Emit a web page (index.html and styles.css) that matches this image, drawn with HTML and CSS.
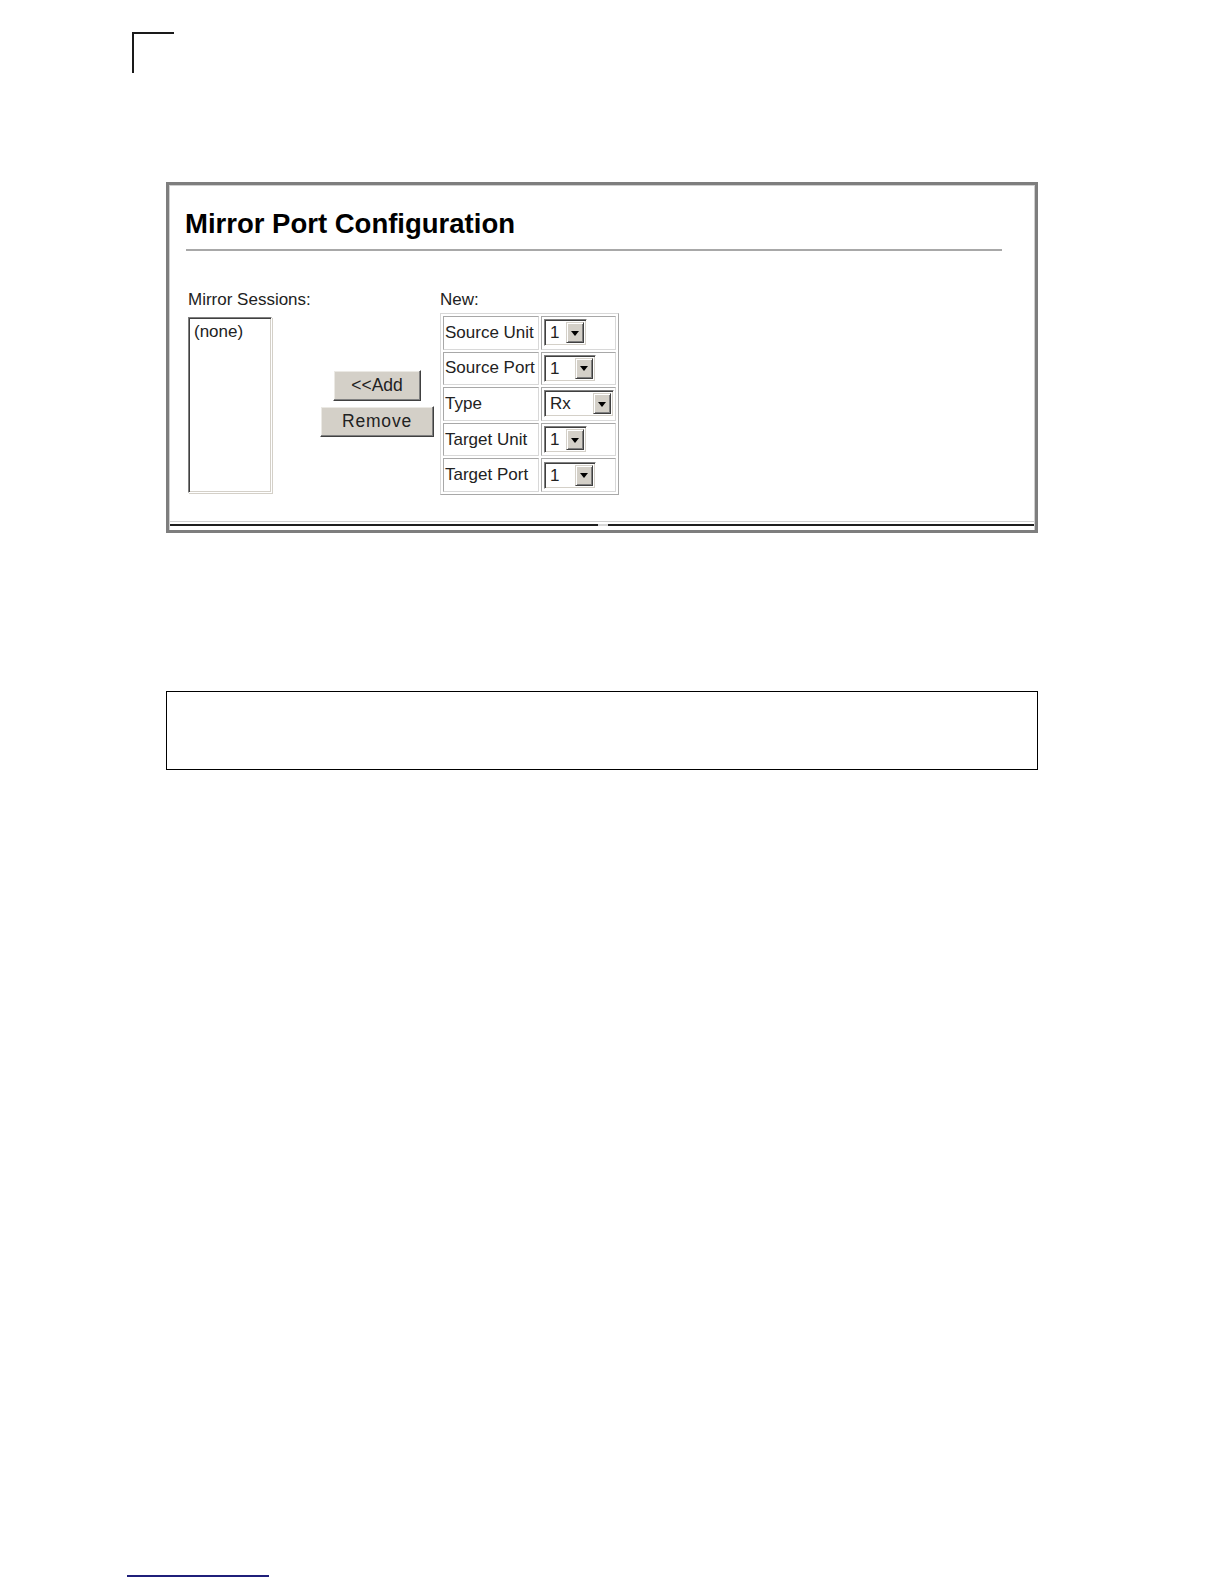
FILE: index.html
```html
<!DOCTYPE html>
<html lang="en">
<head>
<meta charset="utf-8">
<title>Mirror Port Configuration</title>
<link rel="stylesheet" href="styles.css">
</head>
<body>
<div class="page">
  <div class="corner"></div>

  <div class="frame">
    <div class="frame-inner">
      <h1 class="title">Mirror Port Configuration</h1>
      <div class="rule"></div>

      <div class="form">
        <div class="sessions">
          <div class="label">Mirror Sessions:</div>
          <div class="listbox"><div class="option">(none)</div></div>
        </div>

        <div class="actions">
          <button class="btn btn-add" type="button">&lt;&lt;Add</button>
          <button class="btn btn-remove" type="button">Remove</button>
        </div>

        <div class="newsession">
          <div class="label">New:</div>
          <table class="fields">
            <tr>
              <td class="name">Source Unit</td>
              <td class="value"><div class="select w-short"><span class="select-text">1</span><span class="select-btn"></span></div></td>
            </tr>
            <tr>
              <td class="name">Source Port</td>
              <td class="value"><div class="select w-mid"><span class="select-text">1</span><span class="select-btn"></span></div></td>
            </tr>
            <tr>
              <td class="name">Type</td>
              <td class="value"><div class="select w-long"><span class="select-text">Rx</span><span class="select-btn"></span></div></td>
            </tr>
            <tr>
              <td class="name">Target Unit</td>
              <td class="value"><div class="select w-short"><span class="select-text">1</span><span class="select-btn"></span></div></td>
            </tr>
            <tr>
              <td class="name">Target Port</td>
              <td class="value"><div class="select w-mid"><span class="select-text">1</span><span class="select-btn"></span></div></td>
            </tr>
          </table>
        </div>
      </div>

      <div class="hbar">
        <div class="hbar-line">
          <span class="seg seg-left"></span>
          <span class="notch"></span>
          <span class="seg seg-right"></span>
        </div>
      </div>
    </div>
  </div>

  <div class="note-box"></div>

  <div class="footer-line"></div>
</div>
</body>
</html>
```

FILE: styles.css
```css
* {
  box-sizing: border-box;
}

body {
  margin: 0;
  background: #ffffff;
  font-family: "Liberation Sans", Arial, sans-serif;
  color: #222222;
}

.page {
  padding-top: 32px;
}

.corner {
  margin-left: 132px;
  width: 42px;
  height: 41px;
  border-top: 2px solid #1a1a1a;
  border-left: 2px solid #1a1a1a;
}

/* screenshot frame */
.frame {
  margin-top: 109px;
  margin-left: 166px;
  width: 872px;
  height: 351px;
  border: 3px solid #7e7e7e;
}

.frame-inner {
  height: 100%;
  display: flex;
  flex-direction: column;
  border: 1px solid #cfcfcf;
  border-bottom: 0;
  padding: 22px 0 0 15px;
}

.title {
  margin: 0;
  font-size: 27.5px;
  line-height: 32px;
  font-weight: bold;
  color: #000000;
}

.rule {
  margin-top: 9px;
  margin-left: 1px;
  width: 816px;
  height: 2px;
  background: #a8a8a8;
}

.form {
  display: flex;
  align-items: flex-start;
  margin-top: 39px;
}

.label {
  font-size: 17px;
  line-height: 20px;
}

.sessions {
  width: 135px;
  padding-left: 3px;
}

.listbox {
  margin-top: 7px;
  width: 84px;
  height: 176px;
  background: #ffffff;
  border: 1px solid;
  border-color: #808080 #ffffff #ffffff #808080;
  box-shadow: inset 1px 1px 0 #404040, inset -1px -1px 0 #d4d0c8, 1px 1px 0 #d4d0c8;
  padding: 4px 5px;
}

.option {
  font-size: 17px;
  line-height: 20px;
}

.actions {
  width: 114px;
  display: flex;
  flex-direction: column;
  align-items: center;
  gap: 5px;
  padding-top: 80px;
}

.btn {
  font-family: "Liberation Sans", Arial, sans-serif;
  font-size: 17.5px;
  line-height: 1;
  color: #222222;
  background: #d4d0c8;
  height: 31px;
  padding: 0;
  margin: 0;
  border: 1px solid;
  border-color: #ffffff #404040 #404040 #ffffff;
  box-shadow: inset -1px -1px 0 #808080, inset 1px 1px 0 #ebe9e4;
  border-radius: 0;
}

.btn-add {
  width: 88px;
}

.btn-remove {
  width: 114px;
  letter-spacing: 0.8px;
}

.newsession {
  margin-left: 6px;
}

.fields {
  margin-top: 3px;
  border: 1px solid;
  border-color: #d8d8d8 #a8a8a8 #a8a8a8 #d8d8d8;
  border-spacing: 2px;
}

.fields td {
  border: 1px solid;
  border-color: #a8a8a8 #d8d8d8 #d8d8d8 #a8a8a8;
  height: 33.6px;
  padding: 0 1px;
  vertical-align: middle;
}

.fields td.name {
  width: 96px;
  font-size: 17px;
  line-height: 20px;
  white-space: nowrap;
}

.fields td.value {
  width: 75px;
  padding-left: 2px;
}

.select {
  display: flex;
  align-items: stretch;
  height: 27px;
  background: #ffffff;
  border: 1px solid;
  border-color: #808080 #ffffff #ffffff #808080;
  box-shadow: inset 1px 1px 0 #404040, inset -1px -1px 0 #d4d0c8;
  padding: 2px;
}

.w-short {
  width: 43px;
}

.w-mid {
  width: 52px;
}

.w-long {
  width: 70px;
}

.select-text {
  flex: 1;
  font-size: 17px;
  line-height: 21px;
  padding-left: 3px;
  color: #222222;
}

.select-btn {
  width: 18px;
  background: #d4d0c8;
  border: 1px solid;
  border-color: #d4d0c8 #404040 #404040 #d4d0c8;
  box-shadow: inset 1px 1px 0 #ffffff, inset -1px -1px 0 #808080;
  display: flex;
  align-items: center;
  justify-content: center;
}

.select-btn::after {
  content: "";
  width: 0;
  height: 0;
  margin-top: 1px;
  border-left: 4.5px solid transparent;
  border-right: 4.5px solid transparent;
  border-top: 5px solid #000000;
}

/* cut-off horizontal scrollbar edge at frame bottom */
.hbar {
  margin-top: auto;
  margin-bottom: 4px;
  margin-left: -15px;
  border-top: 1px solid #cfcfcf;
  padding-top: 2px;
}

.hbar-line {
  display: flex;
  height: 2px;
}

.seg {
  background: #1e1e1e;
}

.seg-left {
  width: 428px;
}

.notch {
  width: 10px;
  background: #d6d6d6;
}

.seg-right {
  flex: 1;
}

.note-box {
  margin-top: 158px;
  margin-left: 166px;
  width: 872px;
  height: 79px;
  border: 1px solid #000000;
}

.footer-line {
  margin-top: 805px;
  margin-left: 127px;
  width: 142px;
  height: 2px;
  background: #1f1f7a;
}
```
